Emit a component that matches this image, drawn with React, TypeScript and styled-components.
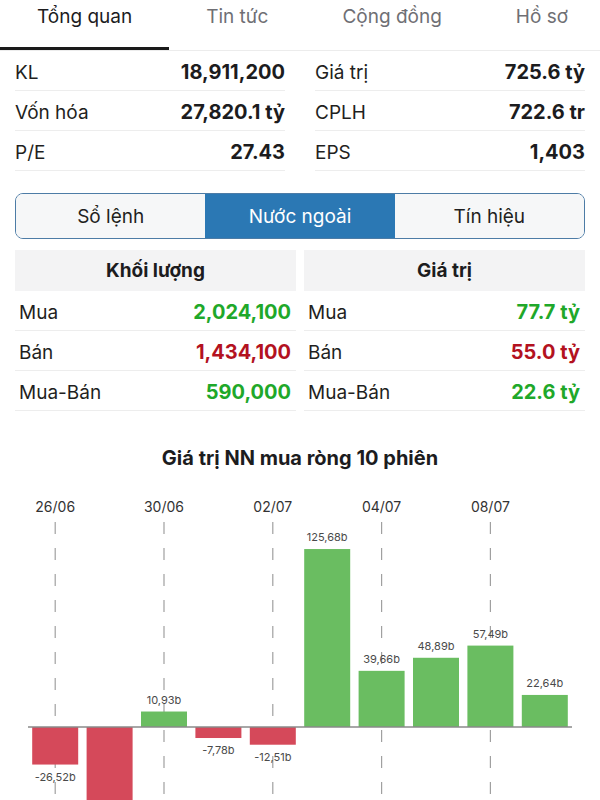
import React from "react";
import styled, { createGlobalStyle } from "styled-components";

const GlobalStyle = createGlobalStyle`
  html, body { margin: 0; padding: 0; background: #ffffff; }
  body { font-family: "Inter", "Liberation Sans", sans-serif; color: #1c1c1e; overflow: hidden; }
  * { box-sizing: border-box; }
`;

const Page = styled.div`
  width: 600px;
  height: 800px;
  overflow: hidden;
  background: #fff;
`;

const TabBar = styled.div`
  display: flex;
  border-bottom: 1px solid #ececec;
`;

const Tab = styled.div<{ $active?: boolean }>`
  height: 50px;
  padding: 3px 37px 0;
  font-size: 19px;
  line-height: 28px;
  white-space: nowrap;
  color: ${(p) => (p.$active ? "#1c1c1e" : "#6f6f74")};
  border-bottom: 3px solid ${(p) => (p.$active ? "#1a1a1a" : "transparent")};
`;

const StatsGrid = styled.div`
  display: grid;
  grid-template-columns: 1fr 1fr;
`;

const StatsCol = styled.div`
  padding: 0 15px;
`;

const StatRow = styled.div`
  height: 40px;
  padding-top: 3px;
  display: flex;
  align-items: center;
  justify-content: space-between;
  border-bottom: 1px solid #ededed;
  font-size: 19px;
`;

const Label = styled.span`
  color: #1f1f21;
`;

const Value = styled.span<{ $tone?: "up" | "down" }>`
  font-size: 20px;
  font-weight: 700;
  color: ${(p) => (p.$tone === "up" ? "#1fa82a" : p.$tone === "down" ? "#b3121f" : "#1c1c1e")};
`;

const Segmented = styled.div`
  margin: 22px 15px 0;
  height: 46px;
  display: grid;
  grid-template-columns: repeat(3, 1fr);
  border: 1.5px solid #4d7ca6;
  border-radius: 8px;
  overflow: hidden;
`;

const Segment = styled.div<{ $active?: boolean }>`
  display: flex;
  align-items: center;
  justify-content: center;
  font-size: 19px;
  background: ${(p) => (p.$active ? "#2b78b4" : "#f6f7f8")};
  color: ${(p) => (p.$active ? "#ffffff" : "#1f1f21")};
`;

const ForeignGrid = styled.div`
  margin-top: 11px;
  padding: 0 15px;
  display: grid;
  grid-template-columns: 1fr 1fr;
  column-gap: 8px;
`;

const ForeignCol = styled.div``;

const HeaderCell = styled.div`
  height: 41px;
  display: flex;
  align-items: center;
  justify-content: center;
  background: #f3f3f4;
  font-size: 19px;
  font-weight: 700;
  color: #1c1c1e;
`;

const ForeignRow = styled(StatRow)`
  padding-left: 4px;
  padding-right: 5px;
`;

const ChartTitle = styled.div`
  margin-top: 35px;
  text-align: center;
  font-size: 20px;
  line-height: 24px;
  font-weight: 700;
  color: #1c1c1e;
`;

const ChartSvg = styled.svg`
  display: block;
  margin-top: 11px;
`;

const tabs = ["Tổng quan", "Tin tức", "Cộng đồng", "Hồ sơ"];

const statsLeft = [
  ["KL", "18,911,200"],
  ["Vốn hóa", "27,820.1 tỷ"],
  ["P/E", "27.43"],
];
const statsRight = [
  ["Giá trị", "725.6 tỷ"],
  ["CPLH", "722.6 tr"],
  ["EPS", "1,403"],
];

type Tone = "up" | "down";
const volRows: [string, string, Tone][] = [
  ["Mua", "2,024,100", "up"],
  ["Bán", "1,434,100", "down"],
  ["Mua-Bán", "590,000", "up"],
];
const valRows: [string, string, Tone][] = [
  ["Mua", "77.7 tỷ", "up"],
  ["Bán", "55.0 tỷ", "down"],
  ["Mua-Bán", "22.6 tỷ", "up"],
];

const bars = [-26.52, -75.32, 10.93, -7.78, -12.51, 125.68, 39.66, 48.89, 57.49, 22.64];
const dates: [number, string][] = [
  [0, "26/06"],
  [2, "30/06"],
  [4, "02/07"],
  [6, "04/07"],
  [8, "08/07"],
];

const SVG_H = 320;
const CHART_LEFT = 28;
const CHART_RIGHT = 572;
const SLOT = (CHART_RIGHT - CHART_LEFT) / bars.length;
const BAR_W = 46;
const ZERO_Y = 246;
const SCALE = 1.416;
const fmt = (v: number) => v.toFixed(2).replace(".", ",") + "b";

function Chart() {
  const cx = (i: number) => CHART_LEFT + SLOT * (i + 0.5);
  return (
    <ChartSvg width={600} height={SVG_H} viewBox={`0 0 600 ${SVG_H}`}>
      {dates.map(([i, d]) => (
        <g key={d}>
          <text x={cx(i)} y={31} textAnchor="middle" fontSize={14} fill="#333" fontFamily="Inter, Liberation Sans, sans-serif">
            {d}
          </text>
          <line x1={cx(i)} x2={cx(i)} y1={41} y2={SVG_H} stroke="#a0a0a0" strokeWidth={1.2} strokeDasharray="12 14" />
        </g>
      ))}
      {bars.map((v, i) => {
        const h = Math.abs(v) * SCALE;
        const x = cx(i) - BAR_W / 2;
        const y = v >= 0 ? ZERO_Y - h : ZERO_Y;
        const ly = v >= 0 ? y - 8 : ZERO_Y + h + 16;
        return (
          <g key={i}>
            <rect x={x} y={y} width={BAR_W} height={h} fill={v >= 0 ? "#6abd61" : "#d5495a"} />
            {ly < SVG_H - 4 && (
              <text x={cx(i)} y={ly} textAnchor="middle" fontSize={11} fill="#4a4a4a" fontFamily="Inter, Liberation Sans, sans-serif">
                {fmt(v)}
              </text>
            )}
          </g>
        );
      })}
      <line x1={CHART_LEFT} x2={CHART_RIGHT} y1={ZERO_Y} y2={ZERO_Y} stroke="#8a8a8a" strokeWidth={1.5} />
    </ChartSvg>
  );
}

export default function App() {
  return (
    <Page>
      <GlobalStyle />
      <TabBar>
        {tabs.map((t, i) => (
          <Tab key={t} $active={i === 0}>
            {t}
          </Tab>
        ))}
      </TabBar>
      <StatsGrid>
        {[statsLeft, statsRight].map((col, ci) => (
          <StatsCol key={ci}>
            {col.map(([l, v]) => (
              <StatRow key={l}>
                <Label>{l}</Label>
                <Value>{v}</Value>
              </StatRow>
            ))}
          </StatsCol>
        ))}
      </StatsGrid>
      <Segmented>
        <Segment>Sổ lệnh</Segment>
        <Segment $active>Nước ngoài</Segment>
        <Segment>Tín hiệu</Segment>
      </Segmented>
      <ForeignGrid>
        {[
          ["Khối lượng", volRows],
          ["Giá trị", valRows],
        ].map(([title, rows]) => (
          <ForeignCol key={title as string}>
            <HeaderCell>{title as string}</HeaderCell>
            {(rows as [string, string, Tone][]).map(([l, v, t]) => (
              <ForeignRow key={l}>
                <Label>{l}</Label>
                <Value $tone={t}>{v}</Value>
              </ForeignRow>
            ))}
          </ForeignCol>
        ))}
      </ForeignGrid>
      <ChartTitle>Giá trị NN mua ròng 10 phiên</ChartTitle>
      <Chart />
    </Page>
  );
}
